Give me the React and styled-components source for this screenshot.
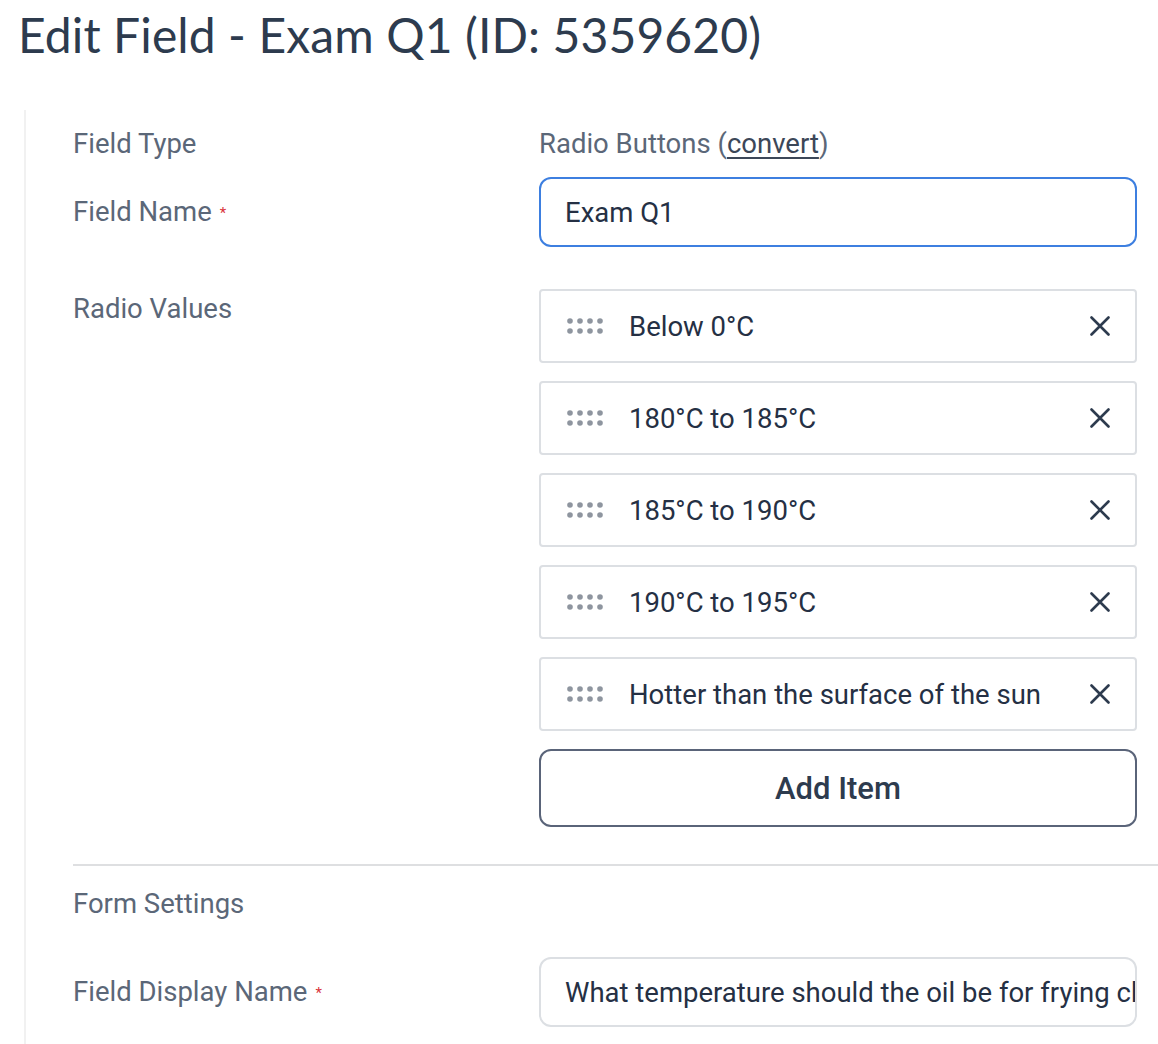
import React from 'react';
import styled, { createGlobalStyle } from 'styled-components';

const GlobalStyle = createGlobalStyle`
  body {
    margin: 0;
    background: #fff;
    font-family: Roboto, 'Liberation Sans', sans-serif;
    color: #253044;
  }
`;

const Page = styled.div`
  width: 1158px;
  height: 1044px;
  overflow: hidden;
`;

const Title = styled.h1`
  margin: 0;
  padding: 4px 0 0 18px;
  height: 110px;
  box-sizing: border-box;
  font-family: Lato, 'Noto Sans', sans-serif;
  font-weight: 400;
  font-size: 48px;
  line-height: 62px;
  letter-spacing: 0.1px;
  color: #2d3b4e;
`;

const Section = styled.section`
  margin-left: 24px;
  border-left: 2px solid #f1f1f1;
  padding: 16px 0 0 47px;
  min-height: 940px;
`;

const Row = styled.div`
  display: grid;
  grid-template-columns: 466px 598px;
  align-items: ${({ $align }) => $align || 'center'};
  margin-top: ${({ $gap }) => $gap || 0}px;
`;

const Label = styled.div`
  font-size: 27.5px;
  line-height: 36px;
  color: #5b6778;
  padding-top: ${({ $top }) => $top || 0}px;
`;

const Required = styled.span`
  color: #d9343a;
  font-size: 15px;
  margin-left: 8px;
  vertical-align: 3px;
`;

const Plain = styled.div`
  font-size: 27.5px;
  line-height: 36px;
  color: #5b6778;

  a {
    color: #3c4758;
    text-decoration: underline;
    text-underline-offset: 4px;
    text-decoration-thickness: 2px;
  }
`;

const TextBox = styled.div`
  height: 70px;
  box-sizing: border-box;
  border: ${({ $focus }) => ($focus ? '2px solid #3d7fe0' : '2px solid #dcdfe3')};
  border-radius: 12px;
  padding: 0 24px;
  display: flex;
  align-items: center;
  font-size: 27.5px;
  color: #253044;
  white-space: nowrap;
  overflow: hidden;
`;

const ValueList = styled.div`
  display: flex;
  flex-direction: column;
  gap: 18px;
`;

const ValueItem = styled.div`
  height: 74px;
  box-sizing: border-box;
  border: 2px solid #dcdfe3;
  border-radius: 4px;
  display: flex;
  align-items: center;
  padding: 0 25px 0 26px;
  font-size: 27.5px;
  color: #253044;
`;

const Handle = styled.svg`
  width: 40px;
  height: 16px;
  margin-right: 22px;
  flex: none;
`;

const ValueText = styled.span`
  flex: 1;
`;

const Remove = styled.svg`
  width: 20px;
  height: 20px;
  flex: none;
`;

const AddButton = styled.button`
  height: 78px;
  border: 2px solid #5a6479;
  border-radius: 12px;
  background: #fff;
  font-family: Roboto, 'Liberation Sans', sans-serif;
  font-size: 31px;
  font-weight: 500;
  color: #2d3b4e;
`;

const Divider = styled.hr`
  border: 0;
  border-top: 2px solid #dedfe1;
  margin: 37px 0 0 0;
`;

const DragDots = () => (
  <Handle viewBox="0 0 40 16">
    {[0, 1].map((r) =>
      [0, 1, 2, 3].map((c) => (
        <circle key={`${r}-${c}`} cx={3 + c * 10} cy={3 + r * 10} r="2.8" fill="#8e959f" />
      ))
    )}
  </Handle>
);

const CloseIcon = () => (
  <Remove viewBox="0 0 20 20">
    <path d="M1.5 1.5 L18.5 18.5 M18.5 1.5 L1.5 18.5" stroke="#2d3b4e" strokeWidth="2.6" strokeLinecap="round" />
  </Remove>
);

const values = ['Below 0°C', '180°C to 185°C', '185°C to 190°C', '190°C to 195°C', 'Hotter than the surface of the sun'];

const App = () => (
  <Page>
    <GlobalStyle />
    <Title>Edit Field - Exam Q1 (ID: 5359620)</Title>

    <Section>
      <Row>
        <Label>Field Type</Label>
        <Plain>
          Radio Buttons (<a href="#convert">convert</a>)
        </Plain>
      </Row>

      <Row $gap={15}>
        <Label>
          Field Name<Required>*</Required>
        </Label>
        <TextBox $focus>Exam Q1</TextBox>
      </Row>

      <Row $gap={42} $align="start">
        <Label $top={2}>Radio Values</Label>
        <ValueList>
          {values.map((v) => (
            <ValueItem key={v}>
              <DragDots />
              <ValueText>{v}</ValueText>
              <CloseIcon />
            </ValueItem>
          ))}
          <AddButton>Add Item</AddButton>
        </ValueList>
      </Row>

      <Divider />

      <Row $gap={20}>
        <Label>Form Settings</Label>
      </Row>

      <Row $gap={35}>
        <Label>
          Field Display Name<Required>*</Required>
        </Label>
        <TextBox>What temperature should the oil be for frying chicken?</TextBox>
      </Row>
    </Section>
  </Page>
);

export default App;
